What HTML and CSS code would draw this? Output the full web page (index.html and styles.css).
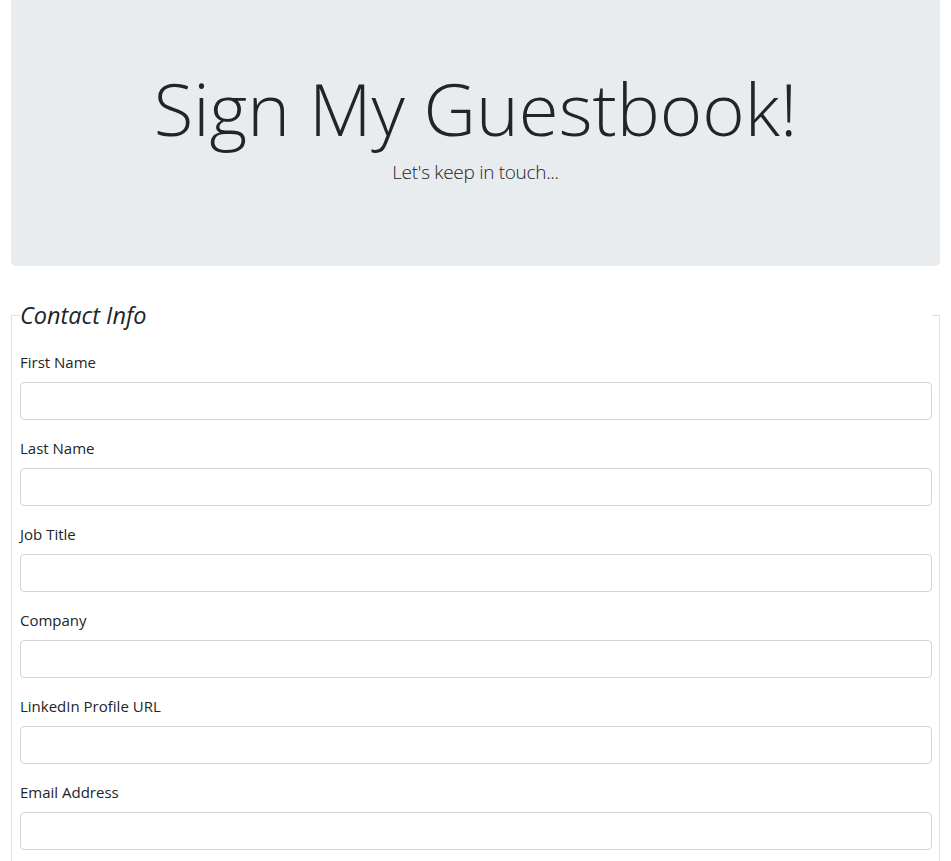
FILE: index.html
```html
<!DOCTYPE html>
<html lang="en">
<head>
<meta charset="utf-8">
<title>Sign My Guestbook!</title>
<link rel="stylesheet" href="styles.css">
</head>
<body>
<div class="page">
  <header class="jumbotron">
    <h1 class="title">Sign My Guestbook!</h1>
    <p class="lead">Let's keep in touch...</p>
  </header>
  <form class="guest-form">
    <fieldset class="contact">
      <legend class="contact-legend">Contact Info</legend>
      <div class="form-group">
        <label class="field-label" for="first">First Name</label>
        <input class="field-input" id="first" type="text">
      </div>
      <div class="form-group">
        <label class="field-label" for="last">Last Name</label>
        <input class="field-input" id="last" type="text">
      </div>
      <div class="form-group">
        <label class="field-label" for="job">Job Title</label>
        <input class="field-input" id="job" type="text">
      </div>
      <div class="form-group">
        <label class="field-label" for="company">Company</label>
        <input class="field-input" id="company" type="text">
      </div>
      <div class="form-group">
        <label class="field-label" for="linkedin">LinkedIn Profile URL</label>
        <input class="field-input" id="linkedin" type="url">
      </div>
      <div class="form-group">
        <label class="field-label" for="email">Email Address</label>
        <input class="field-input" id="email" type="email">
      </div>
    </fieldset>
  </form>
</div>
</body>
</html>
```

FILE: styles.css
```css
* { box-sizing: border-box; }
html, body { margin: 0; padding: 0; background: #fff; }
body {
  font-family: "Open Sans", "Noto Sans", sans-serif;
  font-size: 15px;
  line-height: 1.5;
  color: #212529;
}
.page {
  padding: 0 11px 0 11px;
}
.jumbotron {
  background: #e9ecef;
  border-radius: 0 0 5px 5px;
  padding: 65px 32px 61px;
  margin: 0 0 31px;
  text-align: center;
}
.title {
  margin: 0 0 6px;
  font-size: 72.5px;
  font-weight: 300;
  line-height: 86px;
}
.lead {
  margin: 0 0 18px;
  font-size: 19px;
  font-weight: 300;
  line-height: 30px;
  letter-spacing: -0.3px;
}
.guest-form { margin: 0; }
.contact {
  margin: 0;
  padding: 0 7px 0 8px;
  border: 1px solid #dee2e6;
  border-bottom: 0;
  min-width: 0;
}
.contact-legend {
  width: 100%;
  padding: 0;
  margin: 0 0 17px;
  font-size: 23.5px;
  line-height: 36px;
  font-style: italic;
  font-weight: 400;
}
.form-group {
  display: flex;
  flex-direction: column;
  margin: 0 0 16px;
}
.field-label {
  display: block;
  margin: 0 0 8px;
  line-height: 24px;
  font-size: 15px;
}
.field-input {
  display: block;
  width: 100%;
  height: 38px;
  padding: 6px 12px;
  border: 1px solid #ced4da;
  border-radius: 4px;
  background: #fff;
  font: inherit;
  color: #495057;
}
```
